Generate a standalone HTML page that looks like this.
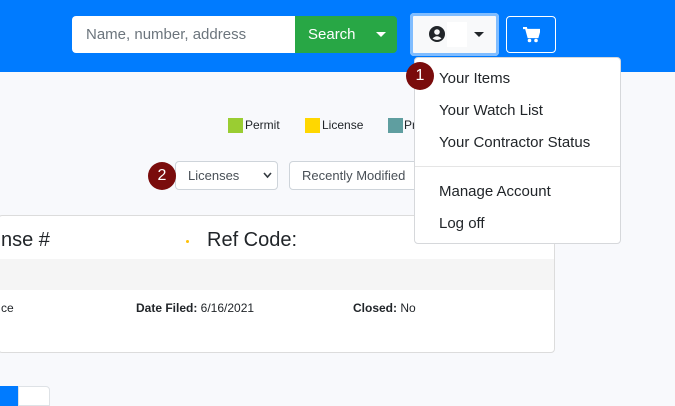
<!DOCTYPE html>
<html><head><style>
*{box-sizing:border-box;margin:0;padding:0}
body{width:675px;height:402px;overflow:hidden;background:#f8f9fc;font-family:"Liberation Sans",sans-serif;position:relative;color:#212529}
.a{position:absolute}
.hdr{left:0;top:0;width:675px;height:72px;background:#007bff}
.inp{left:72px;top:16px;width:224px;height:37px;background:#fff;border-radius:4px 0 0 4px;color:#6c757d;font-size:15px;line-height:37px;padding-left:14px}
.srch{left:295px;top:16px;width:102px;height:37px;background:#28a745;border-radius:0 4px 4px 0;color:#fff;font-size:15px;line-height:37px;padding-left:13px}
.car{width:0;height:0;border-left:5px solid transparent;border-right:5px solid transparent;border-top:5px solid #fff}
.usr{left:410px;top:13px;width:89px;height:43px;background:#f8f9fa;border-radius:4px;box-shadow:0 0 0 3px #80bdff inset}
.cart{left:506px;top:16px;width:50px;height:37px;border:1px solid #fff;border-radius:4px}
.dd{left:414px;top:57px;width:207px;height:187px;background:#fff;border:1px solid #d6d8db;border-radius:4px;font-size:15px;z-index:10}
.dd div{position:absolute;left:24px}
.badge{width:28px;height:28px;border-radius:50%;background:#7a0c0c;color:#fff;font-size:16px;text-align:center;line-height:28px;z-index:11}
.sq{width:15px;height:15px;top:118px}
.lg{top:118px;font-size:12px;line-height:15px}
.sel{top:161px;height:29px;background:#fff;border:1px solid #ced4da;border-radius:4px;font-size:13px;line-height:27px;padding-left:12px;color:#495057}
.card{left:-2px;top:215px;width:557px;height:138px;background:#fff;border:1px solid #dcdcdc;border-radius:4px}
</style></head><body>
<div class="a hdr"></div>
<div class="a inp">Name, number, address</div>
<div class="a srch">Search<div class="a car" style="left:81px;top:16px"></div></div>
<div class="a usr">
 <svg class="a" style="left:19px;top:13px" width="16" height="16" viewBox="0 0 16 16"><circle cx="8" cy="8" r="8" fill="#212529"/><circle cx="8" cy="6" r="2.8" fill="#f8f9fa"/><path d="M3.5 12.5 Q8 8 12.5 12.5 Q8 15.5 3.5 12.5Z" fill="#f8f9fa"/></svg>
 <div class="a" style="left:37px;top:9px;width:20px;height:25px;background:#fff"></div>
 <div class="a car" style="left:64px;top:19px;border-top-color:#212529"></div>
</div>
<div class="a cart"><svg class="a" style="left:16px;top:10px" width="17" height="16" viewBox="0 0 17 16"><path d="M0 1h3l2.5 9h9l2-7H4.5" fill="none" stroke="#fff" stroke-width="2.2"/><path d="M4 3h12.5l-2 7h-9z" fill="#fff"/><circle cx="6.5" cy="13.5" r="1.8" fill="#fff"/><circle cx="13" cy="13.5" r="1.8" fill="#fff"/></svg></div>
<div class="a sq" style="left:228px;background:#9acd32"></div><div class="a lg" style="left:245px">Permit</div>
<div class="a sq" style="left:305px;background:#ffd700"></div><div class="a lg" style="left:322px">License</div>
<div class="a sq" style="left:388px;background:#5f9ea0"></div><div class="a lg" style="left:404px">Pr</div>
<div class="a sel" style="left:175px;width:103px">Licenses<svg class="a" style="left:87px;top:10px" width="9" height="7"><path d="M1 1l3.5 4L8 1" fill="none" stroke="#343a40" stroke-width="1.6"/></svg></div>
<div class="a sel" style="left:289px;width:150px">Recently Modified</div>
<div class="a badge" style="left:148px;top:162px">2</div>
<div class="a card">
 <div class="a" style="left:2px;top:13px;font-size:20px">nse #</div>
 <div class="a" style="left:187px;top:24px;width:3px;height:3px;border-radius:50%;background:#ffc107"></div>
 <div class="a" style="left:208px;top:13px;font-size:20px">Ref Code:</div>
 <div class="a" style="left:0;top:43px;width:555px;height:31px;background:#f5f5f5"></div>
 <div class="a" style="left:2px;top:85px;font-size:12px">ce</div>
 <div class="a" style="left:137px;top:85px;font-size:12px"><b>Date Filed:</b> 6/16/2021</div>
 <div class="a" style="left:354px;top:85px;font-size:12px"><b>Closed:</b> No</div>
</div>
<div class="a dd">
 <div style="top:12px">Your Items</div>
 <div style="top:44px">Your Watch List</div>
 <div style="top:76px">Your Contractor Status</div>
 <div style="left:0;top:108px;width:205px;height:1px;background:#e5e5e5"></div>
 <div style="top:125px">Manage Account</div>
 <div style="top:157px">Log off</div>
</div>
<div class="a badge" style="left:406px;top:62px">1</div>
<div class="a" style="left:0;top:386px;width:18px;height:20px;background:#007bff"></div>
<div class="a" style="left:18px;top:386px;width:32px;height:20px;background:#fff;border:1px solid #dee2e6;border-radius:0 4px 0 0"></div>
</body></html>
